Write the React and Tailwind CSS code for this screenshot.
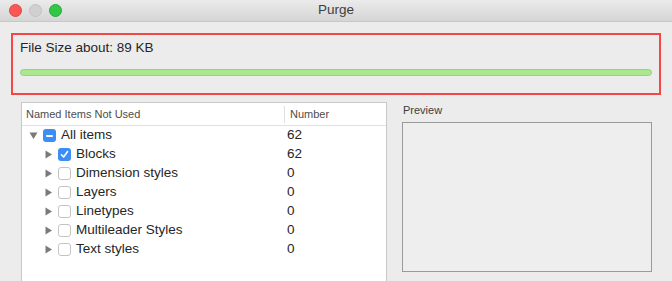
import React from 'react';

const items = [
  { name: 'Blocks', count: 62, checked: true },
  { name: 'Dimension styles', count: 0 },
  { name: 'Layers', count: 0 },
  { name: 'Linetypes', count: 0 },
  { name: 'Multileader Styles', count: 0 },
  { name: 'Text styles', count: 0 },
];

function Triangle({ down }) {
  return (
    <svg width="9" height="9" viewBox="0 0 9 9" className="shrink-0">
      {down ? (
        <path d="M0.5 1.5 L8.5 1.5 L4.5 8 Z" fill="#7a7a7a" />
      ) : (
        <path d="M1.5 0.5 L8 4.5 L1.5 8.5 Z" fill="#7a7a7a" />
      )}
    </svg>
  );
}

function Checkbox({ state }) {
  if (state === 'mixed') {
    return (
      <div className="w-[13px] h-[13px] rounded-[3px] bg-[#3a8ef6] flex items-center justify-center shrink-0">
        <div className="w-[7px] h-[2px] bg-white rounded-full" />
      </div>
    );
  }
  if (state === 'checked') {
    return (
      <div className="w-[13px] h-[13px] rounded-[3px] bg-[#3a8ef6] flex items-center justify-center shrink-0">
        <svg width="9" height="9" viewBox="0 0 9 9">
          <path d="M1.5 4.8 L3.6 7 L7.6 1.6" stroke="white" strokeWidth="1.6" fill="none" strokeLinecap="round" strokeLinejoin="round" />
        </svg>
      </div>
    );
  }
  return <div className="w-[13px] h-[13px] rounded-[3px] bg-white border border-[#c4c4c4] shrink-0" />;
}

export default function App() {
  return (
    <div
      className="w-[672px] h-[281px] bg-[#ececec] overflow-hidden text-[#262626]"
      style={{ fontFamily: '"Liberation Sans", Arial, sans-serif' }}
    >
      {/* title bar */}
      <div className="h-[22px] bg-gradient-to-b from-[#ebebeb] to-[#d5d5d5] border-b border-[#c8c8c8] flex items-center relative">
        <div className="flex items-center gap-[7px] pl-[9px]">
          <div className="w-[13px] h-[13px] rounded-full bg-[#fc5753] border border-[#df4744]" />
          <div className="w-[13px] h-[13px] rounded-full bg-[#d0d0d0] border border-[#c2c2c2]" />
          <div className="w-[13px] h-[13px] rounded-full bg-[#33c748] border border-[#27aa35]" />
        </div>
        <div className="absolute inset-0 flex items-center justify-center text-[13.5px] text-[#3d3d3d]">Purge</div>
      </div>

      {/* file size box */}
      <div className="mt-[11px] ml-[11px] w-[650px] h-[62px] border-2 border-[#f64747] px-[7px] pt-[5px]">
        <div className="text-[13.5px] leading-[16px]">File Size about: 89 KB</div>
        <div className="mt-[13px] h-[7px] rounded-full bg-[#abe88d] border border-[#96d37c]" />
      </div>

      <div className="flex mt-[7px]">
        {/* table */}
        <div className="ml-[21px] w-[366px] h-[200px] bg-white border border-[#c8c8c8] border-b-0">
          <div className="h-[23px] flex items-center border-b border-[#e0e0e0] text-[11px] text-[#4d4d4d]">
            <div className="w-[262px] pl-[4px]">Named Items Not Used</div>
            <div className="h-[17px] border-l border-[#e0e0e0] pl-[5px] flex items-center">Number</div>
          </div>
          <div className="h-[19px] flex items-center text-[13.5px]">
            <div className="w-[262px] flex items-center pl-[7px]">
              <Triangle down />
              <div className="ml-[5px]"><Checkbox state="mixed" /></div>
              <span className="ml-[5px]">All items</span>
            </div>
            <div className="pl-[3px]">62</div>
          </div>
          {items.map((it) => (
            <div key={it.name} className="h-[19px] flex items-center text-[13.5px]">
              <div className="w-[262px] flex items-center pl-[22px]">
                <Triangle />
                <div className="ml-[5px]"><Checkbox state={it.checked ? 'checked' : 'none'} /></div>
                <span className="ml-[5px]">{it.name}</span>
              </div>
              <div className="pl-[3px]">{it.count}</div>
            </div>
          ))}
        </div>

        {/* preview */}
        <div className="ml-[15px] flex flex-col">
          <div className="text-[11px] text-[#3d3d3d] h-[13px] leading-[13px] mt-[2px] pl-[1px]">Preview</div>
          <div className="mt-[5px] w-[250px] h-[150px] border border-[#9a9a9a] bg-[#eeeeee]" />
        </div>
      </div>
    </div>
  );
}
